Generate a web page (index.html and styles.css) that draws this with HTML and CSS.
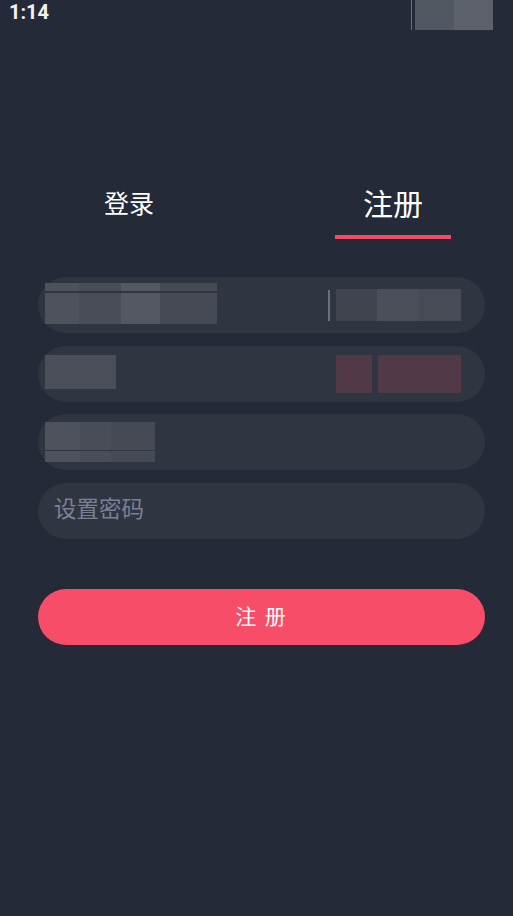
FILE: index.html
```html
<!DOCTYPE html>
<html lang="zh-CN">
<head>
    <meta charset="UTF-8">
    <meta name="viewport" content="width=device-width, initial-scale=1.0">
    <title>注册</title>
    <link rel="stylesheet" href="styles.css">
</head>
<body>
    <!-- Barra de estado -->
    <div class="status-bar">
        <span class="time">1:14</span>
        <div class="status-icons">
            <span class="status-line"></span>
            <span class="status-block"></span>
        </div>
    </div>

    <!-- Pestañas -->
    <div class="tabs">
        <div class="tab">登录</div>
        <div class="tab active">注册</div>
    </div>

    <!-- Formulario de registro -->
    <form class="form">
        <div class="field">
            <div class="blur blur-account">
                <span class="blur-row top"></span>
                <span class="blur-row bottom"></span>
            </div>
            <span class="divider"></span>
            <div class="blur blur-code"></div>
        </div>
        <div class="field">
            <div class="blur blur-short"></div>
            <div class="send">
                <span class="blur-red small"></span>
                <span class="blur-red wide"></span>
            </div>
        </div>
        <div class="field">
            <div class="blur blur-name">
                <span class="blur-row name-top"></span>
                <span class="blur-row name-bottom"></span>
            </div>
        </div>
        <div class="field">
            <input type="password" class="field-input" placeholder="设置密码">
        </div>
        <button type="button" class="submit">注 册</button>
    </form>
</body>
</html>
```

FILE: styles.css
```css
* {
    box-sizing: border-box;
}

body {
    margin: 0;
    width: 513px;
    height: 916px;
    background-color: #252a38;
    font-family: 'Noto Sans CJK SC', 'Noto Sans', sans-serif;
    color: #fff;
    overflow: hidden;
}

.status-bar {
    display: flex;
    justify-content: space-between;
    align-items: flex-start;
    height: 30px;
    padding-left: 9px;
    padding-right: 20px;
}

.time {
    font-family: Roboto, 'Liberation Sans', sans-serif;
    font-weight: bold;
    font-size: 20px;
    line-height: 24px;
    color: #f2f2f2;
}

.status-icons {
    display: flex;
    height: 30px;
}

.status-line {
    width: 1px;
    background-color: #6a6f79;
    margin-right: 3px;
}

.status-block {
    width: 78px;
    background: linear-gradient(90deg, #525861 0 50%, #5c616a 50% 100%);
}

.tabs {
    display: flex;
    gap: 148px;
    padding-left: 71px;
    margin-top: 151px;
}

.tab {
    width: 116px;
    text-align: center;
    font-size: 25px;
    line-height: 42px;
    height: 58px;
    color: #fff;
}

.tab.active {
    font-size: 30px;
    border-bottom: 4px solid #f74966;
}

.form {
    display: flex;
    flex-direction: column;
    gap: 12.5px;
    margin: 38px 28px 0 38px;
}

.field {
    display: flex;
    align-items: center;
    height: 56px;
    border-radius: 28px;
    background-color: #303542;
    padding-left: 7px;
    padding-right: 24px;
}

.blur {
    background-color: #4b4f5a;
}

.blur-account {
    width: 172px;
    height: 41px;
    margin-top: -4px;
    background-color: transparent;
    display: flex;
    flex-direction: column;
    gap: 2px;
}

.blur-row {
    display: block;
    background: linear-gradient(90deg, #4e525c 0 20%, #494d58 20% 44%, #545862 44% 67%, #464a55 67% 100%);
}

.blur-row.top {
    height: 8px;
}

.blur-row.bottom {
    flex: 1;
}

.divider {
    width: 2px;
    height: 31px;
    background-color: #6b7080;
    margin-left: 111px;
    margin-right: 6px;
}

.blur-code {
    width: 125px;
    height: 32px;
    background: linear-gradient(90deg, #40444f 0 33%, #4b4f59 33% 66%, #474b55 66% 100%);
}

.blur-short {
    width: 71px;
    height: 34px;
    margin-top: -3px;
}

.send {
    display: flex;
    gap: 6px;
    margin-left: auto;
}

.blur-red {
    height: 38px;
    background-color: #513948;
}

.blur-red.small {
    width: 36px;
}

.blur-red.wide {
    width: 83px;
}

.blur-name {
    width: 110px;
    height: 40px;
    background-color: transparent;
    display: flex;
    flex-direction: column;
    gap: 1px;
}

.blur-row.name-top {
    height: 28px;
    background: linear-gradient(90deg, #4e525c 0 32%, #494d58 32% 60%, #464a55 60% 100%);
}

.blur-row.name-bottom {
    flex: 1;
    background: linear-gradient(90deg, #4e525c 0 32%, #494d58 32% 60%, #464a55 60% 100%);
}

.field-input {
    flex: 1;
    border: none;
    outline: none;
    background: transparent;
    font-family: 'Noto Sans CJK SC', sans-serif;
    font-size: 22.5px;
    color: #fff;
    padding-left: 9px;
    margin-bottom: 8px;
}

.field-input::placeholder {
    color: #7b8094;
}

.submit {
    margin-top: 38px;
    height: 56px;
    padding-bottom: 5px;
    border: none;
    border-radius: 28px;
    background-color: #f74d68;
    color: #fff;
    font-family: 'Noto Sans CJK SC', sans-serif;
    font-size: 21px;
    letter-spacing: 2px;
    cursor: pointer;
}
```
